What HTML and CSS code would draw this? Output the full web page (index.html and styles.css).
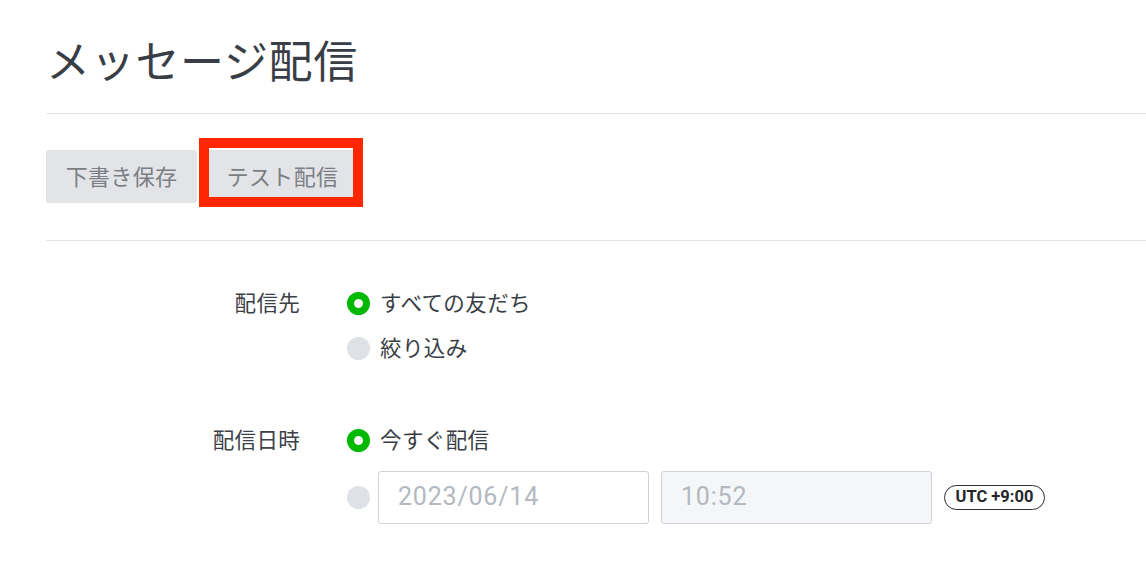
FILE: index.html
```html
<!DOCTYPE html>
<html lang="ja">
<head>
<meta charset="utf-8">
<title>メッセージ配信</title>
<link rel="stylesheet" href="styles.css">
</head>
<body>
<div class="page">
  <h1 class="title">メッセージ配信</h1>
  <div class="toolbar">
    <button class="btn">下書き保存</button>
    <span class="highlight-wrap">
      <button class="btn">テスト配信</button>
      <span class="highlight"></span>
    </span>
  </div>
  <div class="form">
    <div class="field">
      <div class="field-label">配信先</div>
      <div class="field-body">
        <label class="option"><span class="radio checked"></span><span class="opt-text">すべての友だち</span></label>
        <label class="option"><span class="radio"></span><span class="opt-text">絞り込み</span></label>
      </div>
    </div>
    <div class="field">
      <div class="field-label">配信日時</div>
      <div class="field-body">
        <label class="option"><span class="radio checked"></span><span class="opt-text">今すぐ配信</span></label>
        <div class="option option-inputs">
          <span class="radio"></span>
          <div class="input date">2023/06/14</div>
          <div class="input time disabled">10:52</div>
          <span class="tz">UTC +9:00</span>
        </div>
      </div>
    </div>
  </div>
</div>
</body>
</html>
```

FILE: styles.css
```css
* { box-sizing: border-box; }
html, body { margin: 0; padding: 0; background: #fff; }
body {
  font-family: "Noto Sans CJK JP", "Noto Sans", sans-serif;
  color: #393e46;
}
.page {
  padding-left: 46px;
}
.title {
  margin: 0;
  padding: 37px 0 32px;
  font-size: 44px;
  line-height: 44px;
  letter-spacing: 0.7px;
  font-weight: 400;
  color: #393e46;
  border-bottom: 1px solid #e3e4e6;
}
.toolbar {
  display: flex;
  gap: 10px;
  padding: 36px 0 37px;
  border-bottom: 1px solid #e3e4e6;
}
.btn {
  height: 53px;
  width: 151px;
  padding: 0 0 3px;
  border: none;
  border-radius: 3px;
  background: #e3e4e7;
  color: #7b7e83;
  font-family: "Noto Sans CJK JP", sans-serif;
  font-size: 22px;
  letter-spacing: 0.3px;
  line-height: 50px;
  text-align: center;
  cursor: pointer;
}
.highlight-wrap {
  position: relative;
  display: inline-flex;
}
.highlight {
  position: absolute;
  left: -8px;
  top: -12px;
  width: 164px;
  height: 69px;
  border: 10px solid #ff2600;
  pointer-events: none;
}
.form {
  padding-top: 40px;
}
.field {
  display: grid;
  grid-template-columns: 254px 1fr;
  column-gap: 46px;
  margin-bottom: 47px;
}
.field-label {
  text-align: right;
  font-size: 21.5px;
  letter-spacing: 0.3px;
  line-height: 41px;
  padding-bottom: 4px;
  color: #3c4047;
}
.field-body {
  display: flex;
  flex-direction: column;
}
.option {
  display: flex;
  align-items: center;
  height: 45px;
  font-size: 21.5px;
  letter-spacing: 0.4px;
}
.option-inputs {
  height: 53px;
  margin-top: 8px;
}
.radio {
  width: 23px;
  height: 23px;
  border-radius: 50%;
  background: #dee1e5;
  flex: none;
  margin-left: 1px;
}
.radio.checked {
  background: #fff;
  border: 7.5px solid #00b900;
}
.opt-text {
  margin-left: 10px;
  padding-bottom: 5px;
  color: #393e46;
}
.input {
  height: 53px;
  width: 271px;
  border: 1px solid #cdd2d8;
  border-radius: 3px;
  padding-left: 19px;
  font-family: Roboto, "Liberation Sans", sans-serif;
  font-size: 25px;
  letter-spacing: 0.8px;
  line-height: 50px;
  color: #b3b9c0;
}
.input.date {
  margin-left: 8px;
}
.input.time {
  margin-left: 12px;
}
.input.disabled {
  background: #f5f6f8;
}
.tz {
  margin-left: 12px;
  height: 25px;
  width: 101px;
  padding: 0;
  text-align: center;
  border: 1.3px solid #2b2d31;
  border-radius: 13px;
  font-family: Roboto, "Liberation Sans", sans-serif;
  font-weight: 700;
  font-size: 16.5px;
  letter-spacing: 0;
  line-height: 22px;
  color: #25272b;
  white-space: nowrap;
}
```
